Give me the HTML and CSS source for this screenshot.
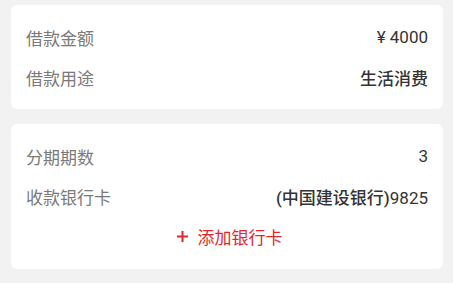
FILE: index.html
```html
<!DOCTYPE html>
<html lang="zh">
<head>
  <meta charset="UTF-8">
  <meta name="viewport" content="width=device-width, initial-scale=1.0">
  <title>借款信息</title>
  <link rel="stylesheet" href="styles.css">
</head>
<body>
  <div class="page">
    <div class="card card-top">
      <div class="row"><span class="label">借款金额</span><span class="value">¥ 4000</span></div>
      <div class="row"><span class="label">借款用途</span><span class="value strong">生活消费</span></div>
    </div>

    <div class="card card-bottom">
      <div class="row"><span class="label">分期期数</span><span class="value">3</span></div>
      <div class="row"><span class="label">收款银行卡</span><span class="value strong">(中国建设银行)<span class="num">9825</span></span></div>
      <div class="add-card">
        <svg class="plus" viewBox="0 0 14 14" width="13" height="13">
          <path d="M7 1 V13 M1 7 H13" stroke="#e3262b" stroke-width="2.2" fill="none"/>
        </svg>
        <span>添加银行卡</span>
      </div>
    </div>
  </div>
</body>
</html>
```

FILE: styles.css
```css
html, body {
  margin: 0;
  padding: 0;
  width: 100%;
  height: 100%;
}

body {
  background-color: #f2f2f2;
  font-family: Roboto, "Noto Sans CJK SC", "Noto Sans", sans-serif;
  font-size: 17px;
}

.page {
  padding: 5px 10px 0 11px;
  display: flex;
  flex-direction: column;
  gap: 15px;
}

.card {
  background-color: #fff;
  border-radius: 6px;
  padding: 0 15px;
}

.card-top {
  padding-top: 12px;
  padding-bottom: 12px;
}

.card-bottom {
  padding-top: 12px;
  padding-bottom: 13px;
}

.row {
  height: 40px;
  display: flex;
  align-items: center;
  justify-content: space-between;
}

.label {
  color: #7a7a7a;
}

.value {
  color: #333;
}

.value.strong {
  font-weight: 500;
}

.value .num {
  font-weight: 400;
}

.add-card {
  height: 40px;
  display: flex;
  align-items: center;
  justify-content: center;
  gap: 9px;
  color: #e3262b;
  padding-left: 4px;
}

.add-card .plus {
  display: block;
}
```
